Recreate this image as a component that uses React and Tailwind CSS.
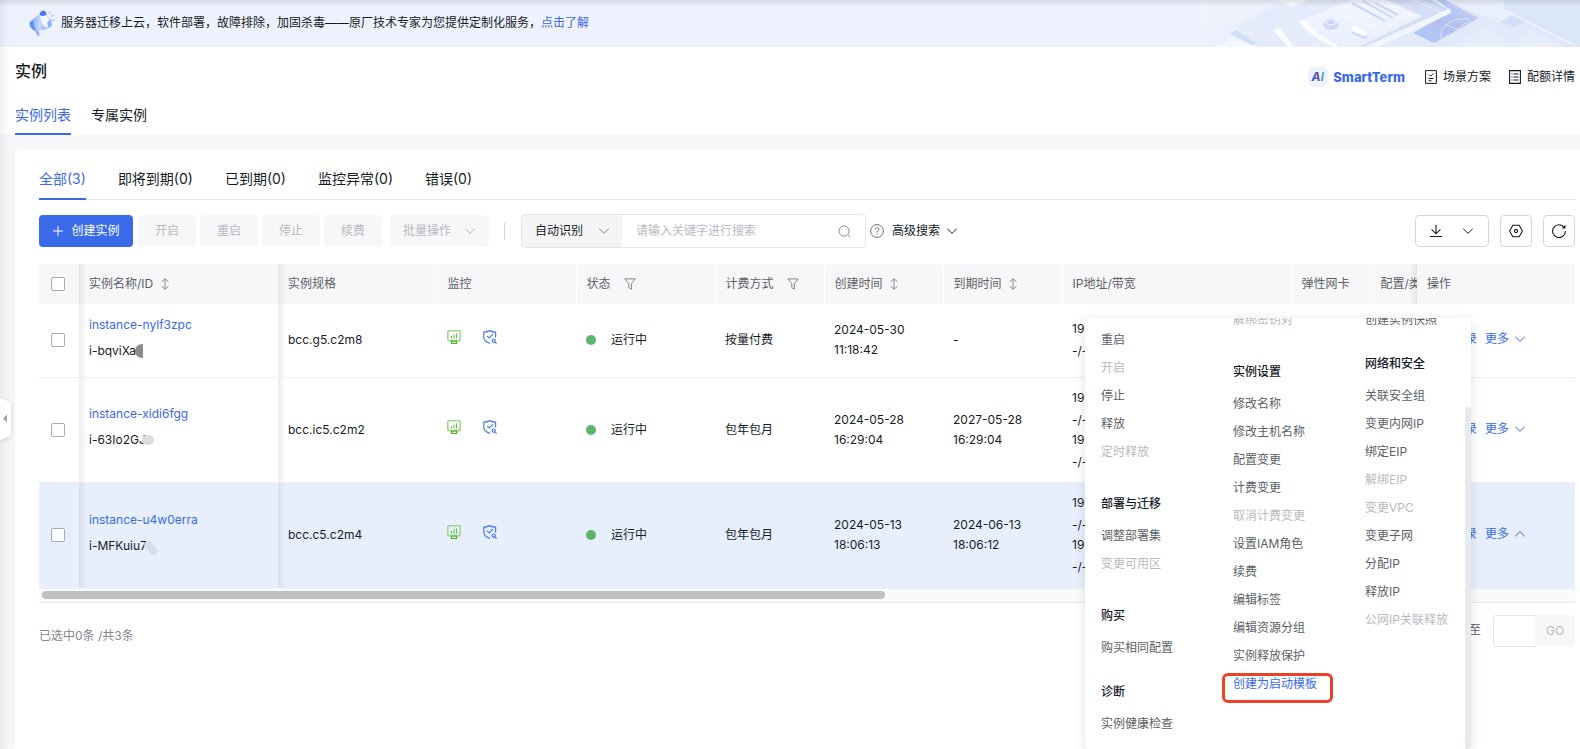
const SECTIONS = [
  {
    className: 'w-[132px] shrink-0 pt-5',
    groups: [
      { gap: 'mb-6', items: ['重启', '!开启', '停止', '释放', '!定时释放'] },
      { title: '部署与迁移', gap: 'mb-6', items: ['调整部署集', '!变更可用区'] },
      { title: '购买', gap: 'mb-4', items: ['购买相同配置'] },
      { title: '诊断', gap: 'mb-4', items: ['实例健康检查'] },
    ],
  },
  {
    className: 'w-[132px] shrink-0',
    groups: [
      { gap: 'mb-6', items: ['!解绑密钥对'] },
      {
        title: '实例设置',
        gap: '',
        items: [
          '修改名称', '修改主机名称', '配置变更', '计费变更', '!取消计费变更', '设置IAM角色',
          '续费', '编辑标签', '编辑资源分组', '实例释放保护', '*创建为启动模板',
        ],
      },
    ],
  },
  {
    className: 'flex-1',
    groups: [
      { gap: 'mb-4', items: ['创建实例快照'] },
      {
        title: '网络和安全',
        gap: '',
        items: [
          '关联安全组', '变更内网IP', '绑定EIP', '!解绑EIP', '!变更VPC', '变更子网',
          '分配IP', '释放IP', '!公网IP关联释放',
        ],
      },
    ],
  },
]

const INSTANCES = [
  { name: 'instance-nylf3zpc', id: 'i-bqviXa', mask: 'half', spec: 'bcc.g5.c2m8', billing: '按量付费', created: ['2024-05-30', '11:18:42'], expires: ['-'], ips: 1, height: 'h-[73px]' },
  { name: 'instance-xidi6fgg', id: 'i-63Io2GJ', mask: 'blob', spec: 'bcc.ic5.c2m2', billing: '包年包月', created: ['2024-05-28', '16:29:04'], expires: ['2027-05-28', '16:29:04'], ips: 2, height: 'h-[105px]' },
  { name: 'instance-u4w0erra', id: 'i-MFKuiu7', mask: 'stroke', spec: 'bcc.c5.c2m4', billing: '包年包月', created: ['2024-05-13', '18:06:13'], expires: ['2024-06-13', '18:06:12'], ips: 2, height: 'h-[106px]', active: true },
]

const TABS = ['全部(3)', '即将到期(0)', '已到期(0)', '监控异常(0)', '错误(0)']

const pinShadow = 'bg-linear-to-r from-black/7 to-transparent bg-[length:8px_100%] bg-no-repeat'

function Chevron({ className = '', up = false }) {
  return (
    <svg viewBox="0 0 12 12" className={`size-3 shrink-0 ${className}`} fill="none" stroke="currentColor" strokeWidth="1">
      <path d={up ? 'M1.2 8.3 6 3.7l4.8 4.6' : 'M1.2 3.7 6 8.3l4.8-4.6'} />
    </svg>
  )
}

function SortIcon() {
  return (
    <svg viewBox="0 0 8 12" className="h-3 w-2 shrink-0" fill="none" stroke="#84868c" strokeWidth="1">
      <path d="M4 1v10M.6 3.8 4 .6l3.4 3.2M.6 8.2 4 11.400l3.400-3.200" />
    </svg>
  )
}

function FilterIcon() {
  return (
    <svg viewBox="0 0 12 12" className="size-3 shrink-0" fill="none" stroke="#84868c" strokeWidth="1">
      <path d="M.8.9h10.4L7.4 5.6v5.6L4.8 9.6v-4z" />
    </svg>
  )
}

function MonitorIcon() {
  return (
    <svg viewBox="0 0 14 14" className="size-[14px]" fill="none">
      <rect x=".8" y=".8" width="12.4" height="9.8" rx="1" stroke="#9fdb86" strokeWidth="1.6" />
      <path d="M4.5 8.6V6M7 8.6V4.6M9.5 8.6V3.2" stroke="#6cc04a" strokeWidth="1.1" />
      <path d="M4.4 13.3v-2.200h5.200v2.200z" fill="#fff" stroke="#52b52f" strokeWidth="1.2" />
    </svg>
  )
}

function ShieldIcon() {
  return (
    <svg viewBox="0 0 14 14" className="size-[14px]" fill="none" stroke="#4a78ee" strokeWidth="1.2">
      <path d="M7 13.400C3 12.200.8 10 .8 7V2.200C3 2.100 5 1.500 6.700.6c1.700.9 3.700 1.500 5.900 1.600V7.500" />
      <path d="m4 5.800 2.200 2.200 3.800-3.800" />
      <circle cx="10.700" cy="10.600" r="1.600" />
      <path d="m11.800 11.800 1.800 1.800" />
    </svg>
  )
}

function Megaphone() {
  return (
    <svg viewBox="0 0 28 28" className="size-7" fill="none">
      <defs>
        <linearGradient id="horn" x1="0" y1="0" x2="1" y2="0">
          <stop offset="0" stopColor="#6f9bf8" />
          <stop offset=".45" stopColor="#c4d8ff" />
          <stop offset="1" stopColor="#7da5fb" />
        </linearGradient>
      </defs>
      <path d="M6 19l4 1 1.800 6c-1 1.300-2.400 1-3 0z" fill="#8fb2fb" />
      <path d="M2 13c2-2.500 6-4.500 10.500-9.500C17 1 23.500 12 23.500 17c-4 3.500-9 4-15 5C4 21 .5 17 2 13z" fill="url(#horn)" />
      <path d="M2 13c-1.500 3.500 2 8.500 6.500 9-2-2.500-3-6-3-10C4 12.300 2.800 12.500 2 13z" fill="#5f8ff6" />
      <ellipse cx="17" cy="11.500" rx="4" ry="7.400" transform="rotate(-24 17 11.500)" fill="#f1f6ff" />
      <path d="M11.800 6C11.500 2.500 15 .8 17.500 2.600l1 3.200c-1.800 1.500-4.700 1.500-6.700.2z" fill="#4877f2" />
      <path d="M19 13.500c2-.5 3.500-3 3.500-4.500l1.500 7-3.500 3z" fill="#8db0fb" />
      <path d="M21 4.500l1.300-2.200M23 7.500l2.500-1.300M24 11l2.500.3" stroke="#a9c4fc" strokeWidth="1.300" />
    </svg>
  )
}

function BannerArt() {
  return (
    <svg viewBox="0 0 380 47" className="absolute right-0 top-0 h-full w-[380px]" preserveAspectRatio="xMaxYMid slice" fill="none">
      <defs>
        <linearGradient id="fade" x1="0" y1="0" x2="1" y2="0">
          <stop offset="0" stopColor="#e4ebfa" stopOpacity="0" />
          <stop offset=".3" stopColor="#e5ecfb" />
          <stop offset="1" stopColor="#dfe7f9" />
        </linearGradient>
        <linearGradient id="glow" x1="0" y1="0" x2="0" y2="1">
          <stop offset="0" stopColor="#f3f6fe" />
          <stop offset="1" stopColor="#e9effc" />
        </linearGradient>
        <linearGradient id="deep" x1="0" y1="1" x2="1" y2="0">
          <stop offset="0" stopColor="#b3cbf8" />
          <stop offset=".5" stopColor="#b2bff0" />
          <stop offset="1" stopColor="#c6d6f8" />
        </linearGradient>
      </defs>
      <rect width="380" height="47" fill="url(#fade)" />
      <path d="M0 0h80L36 24 0 30z" fill="#eff3fd" opacity=".8" />
      <path d="M36 26 78 5l14 3 16-8h42l-50 22 12 25H62z" fill="#e3eafa" opacity=".8" />
      <path d="M78 0l14 7 15-7z" fill="#f8faff" />
      <path d="M36 30l22 14-6 1-22-11z" fill="#cfdff8" />
      <path d="M16 47l17-9 24 9z" fill="#f3f7fe" />
      <path d="M98 21 152 0h76l22 10-76 37h-40q-22-8-36-26z" fill="#d6dff7" />
      <path d="M98 21 152 0h34l36 16-63 31h-25q-22-8-36-26z" fill="url(#glow)" />
      <path d="M98 21q16 18 36 26l5-1Q115 34 106 21z" fill="#fbfcff" />
      <path d="M145 14l34 16" stroke="#fafcff" />
      <path d="M212 0l36 15" stroke="#e9effd" />
      <path d="M152 3l33 18M163 1l30 17M175 3l23 12" stroke="#ccd7f6" strokeWidth="2" />
      <path d="M237 0h8l34 18-45 25-21-10 38-21z" fill="url(#deep)" />
      <path d="M222 0h13l16 10v3l-73 34h-14l80-36z" fill="#f4f7ff" opacity=".9" />
      <path d="M222 0h10l16 9-4 2z" fill="#ccd7f6" />
      <path d="M241 38c-2-10 10-21 28-19M258 34c-1-8 8-13 18-12M245 24l32 14" stroke="#dce5fb" />
      <ellipse cx="131" cy="24" rx="8" ry="6" fill="#cddaf7" />
      <ellipse cx="131" cy="21.500" rx="7" ry="4" fill="#e6edfc" />
      <ellipse cx="131" cy="22" rx="4" ry="2" fill="#c9d7f6" />
      <path d="M152 27l3-1 12 5v5l-3 1-12-5z" fill="#fafcff" />
      <path d="M152 31l12 5 3-1v3l-3 1-12-5z" fill="#d2def7" />
      <path d="M74 31q3-4 7-2l13 18h-6z" fill="#fafcff" />
      <path d="M246 0h56l11 14-14 9-30-13z" fill="#e9effb" />
      <path d="M300 22l18-10 14 6-18 9z" fill="#d3dff8" />
      <path d="M304 0h76v47h-6L304 10z" fill="#dce6f9" />
      <path d="M304 10l68 34" stroke="#f1f5fe" strokeWidth="1.500" />
      <path d="M250 47l36-20 26 14 20-12 34 18z" fill="#e6edfb" opacity=".8" />
    </svg>
  )
}

function Banner() {
  return (
    <div className="relative flex h-[47px] items-center bg-[#eef2fe] pl-7">
      <BannerArt />
      <div className="relative flex items-center gap-[5px] pb-0.5">
        <Megaphone />
        <p>
          服务器迁移上云，软件部署，故障排除，加固杀毒——原厂技术专家为您提供定制化服务，
          <a href="#learn" className="text-[#3a69ea]">点击了解</a>
        </p>
      </div>
      <div className="absolute inset-x-0 top-0 h-1.5 bg-linear-to-b from-black/10 to-transparent" />
    </div>
  )
}

function PageHeader() {
  return (
    <header className="flex h-[88px] justify-between bg-white pl-[15px] pr-[5px]">
      <div className="flex flex-col justify-between pt-3">
        <h1 className="text-base leading-6 font-medium text-[#151b26]">实例</h1>
        <nav className="flex gap-5 text-sm">
          <a href="#list" className="h-[31px] border-b-2 border-[#3a69ea] leading-[22px] text-[#3a69ea]">实例列表</a>
          <a href="#dedicated" className="leading-[22px]">专属实例</a>
        </nav>
      </div>
      <div className="mt-5 flex h-5 items-center">
        <a href="#smartterm" className="flex items-center gap-[5px] text-[13px] font-extrabold text-[#3a69ea]">
          <span className="flex size-5 items-center justify-center rounded-md bg-[#eef2ff]">
            <span className="bg-linear-to-r from-[#2b5bf0] via-[#6a4bb0] to-[#35d0c8] bg-clip-text pr-px text-xs font-extrabold text-transparent italic">AI</span>
          </span>
          SmartTerm
        </a>
        <a href="#scenes" className="ml-5 flex items-center gap-1.5">
          <svg viewBox="0 0 12 14" className="h-[14px] w-3" fill="none" stroke="#151b26" strokeWidth="1">
            <path d="M3.500.6H.6v12.800h10.800V.6H8.500M3.500.6h5M4 4.600l1.600 1.600L8.400 3.400M3.500 8.500h5M3.500 10.800h3" />
          </svg>
          场景方案
        </a>
        <a href="#quota" className="ml-[18px] flex items-center gap-1.5">
          <svg viewBox="0 0 12 14" className="h-[14px] w-3" fill="none" stroke="#151b26" strokeWidth="1.100">
            <path d="M.6.6h10.800v12.800H.6zM2.500 4h1M4.500 4h5M2.500 7h1M4.500 7h5M2.500 10h1M4.500 10h5" />
          </svg>
          配额详情
        </a>
      </div>
    </header>
  )
}

function DisabledButton({ children, className = 'w-[58px]' }) {
  return (
    <button disabled className={`flex h-8 items-center justify-center rounded bg-[#f7f7f9] text-[#b8babf] ${className}`}>
      {children}
    </button>
  )
}

function Toolbar() {
  return (
    <div className="mt-[15px] flex h-8 items-center">
      <button className="mr-[5px] flex h-8 w-[94px] items-center justify-center gap-2 rounded bg-[#3a69ea] pl-px text-white">
        <svg viewBox="0 0 10 10" className="size-2.5" stroke="#fff" strokeWidth="1"><path d="M5 0v10M0 5h10" /></svg>
        创建实例
      </button>
      <div className="flex gap-1">
        <DisabledButton>开启</DisabledButton>
        <DisabledButton>重启</DisabledButton>
        <DisabledButton>停止</DisabledButton>
        <DisabledButton>续费</DisabledButton>
      </div>
      <DisabledButton className="ml-2 w-[99px] gap-[13px]">批量操作 <Chevron /></DisabledButton>
      <div className="ml-[15px] h-[17px] w-px bg-[#d4d6d9]" />

      <div className="ml-4 flex h-[34px] w-[345px] items-center overflow-hidden rounded border border-[#e4e5e8]">
        <div className="relative h-full w-[100px] shrink-0">
          <select aria-label="搜索类型" className="h-full w-full appearance-none bg-[#f5f5f6] pl-[13px]">
            <option>自动识别</option>
          </select>
          <Chevron className="pointer-events-none absolute right-3 top-[10px] text-[#84868c]" />
        </div>
        <input aria-label="搜索" placeholder="请输入关键字进行搜索" className="min-w-0 flex-1 pl-[14px] outline-none placeholder:text-[#b8babf]" />
        <svg viewBox="0 0 14 14" className="mr-[14px] size-[13px]" fill="none" stroke="#84868c" strokeWidth="1">
          <circle cx="6.500" cy="6.500" r="5.500" /><path d="m10.500 10.500 2.700 2.700" />
        </svg>
      </div>
      <svg viewBox="0 0 14 14" className="ml-1 size-[14px]" fill="none" stroke="#5c5f66" strokeWidth=".9">
        <circle cx="7" cy="7" r="6.400" />
        <path d="M5.200 5.600c0-2.500 3.700-2.400 3.700-.2C8.900 7 7 6.800 7 8.500M7 9.600v1" />
      </svg>
      <button className="ml-2 flex items-center gap-1.5">高级搜索 <Chevron /></button>

      <div className="ml-auto flex gap-[11px]">
        <button aria-label="下载" className="flex h-8 w-[74px] items-center justify-center gap-5 rounded border border-[#d4d6d9]">
          <svg viewBox="0 0 12 14" className="h-[14px] w-3" fill="none" stroke="#151b26" strokeWidth="1.100">
            <path d="M6 .8v9M1.600 5.400 6 9.800l4.400-4.400M0 12.500h12" />
          </svg>
          <Chevron />
        </button>
        <button aria-label="设置" className="flex size-8 items-center justify-center rounded border border-[#d4d6d9]">
          <svg viewBox="0 0 14 14" className="size-[14px]" fill="none" stroke="#151b26" strokeWidth="1.100">
            <path d="M3.800 1.200h6.400L13.400 7l-3.200 5.800H3.800L.6 7z" /><circle cx="7" cy="7" r="1.600" />
          </svg>
        </button>
        <button aria-label="刷新" className="flex size-8 items-center justify-center rounded border border-[#d4d6d9]">
          <svg viewBox="0 0 14 14" className="size-[14px]" fill="none" stroke="#151b26" strokeWidth="1.100">
            <path d="M12.300 3.600A6.400 6.400 0 1 0 13.400 7" />
            <path d="M13.400.8v3.700H9.800z" fill="#151b26" stroke="none" />
          </svg>
        </button>
      </div>
    </div>
  )
}

function Checkbox({ label }) {
  return (
    <input type="checkbox" aria-label={label} className="ml-3 block size-[14px] appearance-none rounded-xs border border-[#a9abb0] bg-white" />
  )
}

function Mask({ type }) {
  if (type === 'half') {
    return <span className="-ml-px h-[14px] w-2 rounded-l-full bg-[#8c8c8c]" />
  }
  if (type === 'blob') {
    return <span className="-ml-1 h-2.5 w-3 rounded-full bg-[#dcdcdd]" />
  }
  return <span className="mt-1 h-4 w-2 -rotate-40 rounded-full bg-[#d5dcea]" />
}

function InstanceRow({ row }) {
  return (
    <tr className={`${row.height} border-b border-[#eeeff1] ${row.active ? 'bg-[#e7effd]' : ''}`}>
      <td><Checkbox label={row.name} /></td>
      <td className={`pb-[5px] pl-2.5 leading-[26px] ${pinShadow}`}>
        <a href="#instance" className="block text-[#3a69ea]">{row.name}</a>
        <div className="flex items-center">{row.id}<Mask type={row.mask} /></div>
      </td>
      <td className={`pl-2.5 ${pinShadow}`}>{row.spec}</td>
      <td className="pb-1.5 pl-2.5">
        <div className="flex gap-[22px]"><MonitorIcon /><ShieldIcon /></div>
      </td>
      <td className="pl-2.5">
        <div className="flex items-center gap-[15px]">
          <span className="size-2.5 rounded-full bg-[#5bb56b]" />运行中
        </div>
      </td>
      <td className="pl-2.5">{row.billing}</td>
      <td className="pl-2.5">{row.created.map(t => <div key={t}>{t}</div>)}</td>
      <td className="pl-2.5">{row.expires.map(t => <div key={t}>{t}</div>)}</td>
      <td className="pl-2.5">
        {Array.from({ length: row.ips }, (_, i) => (
          <div key={i} className="flex flex-col gap-0.5"><span>192.168.0.{i + 2}</span><span>-/-</span></div>
        ))}
      </td>
      <td className="pl-2.5">-</td>
      <td className="pl-2.5">-</td>
      <td className="pb-0.5 pl-2.5">
        <div className="flex items-center text-[#3a69ea]">
          <a href="#vnc">VNC登录</a>
          <button className="ml-2 flex items-center gap-[5px]">更多 <Chevron up={row.active} /></button>
        </div>
      </td>
    </tr>
  )
}

function InstanceTable() {
  const th = 'pl-2.5 text-left font-normal border-l border-white'
  return (
    <div className="mt-[17px]">
      <table className="w-full table-fixed border-collapse">
        <colgroup>
          <col className="w-10" />
          <col className="w-[199px]" />
          <col className="w-[159px]" />
          <col className="w-[139px]" />
          <col className="w-[139px]" />
          <col className="w-[109px]" />
          <col className="w-[119px]" />
          <col className="w-[119px]" />
          <col />
          <col className="w-[79px]" />
          <col className="w-[47px]" />
          <col className="w-[158px]" />
        </colgroup>
        <thead>
          <tr className="h-10 bg-[#f7f7f9] text-[#5c5f66]">
            <th><Checkbox label="全选" /></th>
            <th className={`pl-2.5 text-left font-normal ${pinShadow}`}>
              <div className="flex items-center gap-2">实例名称/ID <SortIcon /></div>
            </th>
            <th className={`pl-2.5 text-left font-normal ${pinShadow}`}>实例规格</th>
            <th className={th}>监控</th>
            <th className={th}><div className="flex items-center gap-[13px]">状态 <FilterIcon /></div></th>
            <th className={th}><div className="flex items-center gap-[13px]">计费方式 <FilterIcon /></div></th>
            <th className={th}><div className="flex items-center gap-[7px]">创建时间 <SortIcon /></div></th>
            <th className={th}><div className="flex items-center gap-[7px]">到期时间 <SortIcon /></div></th>
            <th className={th}>IP地址/带宽</th>
            <th className={th}>弹性网卡</th>
            <th className={`${th} overflow-hidden whitespace-nowrap bg-linear-to-l from-black/7 to-transparent bg-[length:8px_100%] bg-right bg-no-repeat`}>配置/类型</th>
            <th className="pl-2.5 text-left font-normal">操作</th>
          </tr>
        </thead>
        <tbody>
          {INSTANCES.map(row => <InstanceRow key={row.name} row={row} />)}
        </tbody>
      </table>
      <div className="flex h-[14px] items-center border-b border-[#e8e9eb] bg-[#fafafa] pl-[3px]">
        <div className="h-2 w-[55%] rounded-full bg-[#c1c1c1]" />
      </div>
    </div>
  )
}

function MoreMenu() {
  return (
    <div className="absolute top-[318px] right-[109px] h-[431px] w-[386px] overflow-hidden rounded bg-white shadow-[0_2px_12px_rgba(7,12,20,0.12)]">
      <div className="-mt-3 flex pl-4">
        {SECTIONS.map((col, i) => (
          <div key={i} className={col.className}>
            {col.groups.map((group, j) => (
              <section key={j} className={group.gap}>
                {group.title && <h3 className="mb-1 leading-7 font-medium text-[#151b26]">{group.title}</h3>}
                {group.items.map(item => <MenuItem key={item} item={item} />)}
              </section>
            ))}
          </div>
        ))}
      </div>
      <div className="absolute top-[89px] right-0 bottom-0 w-1.5 rounded-t-full bg-[#e8e9eb]" />
    </div>
  )
}

// "!" marks a disabled entry, "*" the highlighted one
function MenuItem({ item }) {
  if (item[0] === '!') {
    return <button disabled className="block h-7 whitespace-nowrap text-[#b8babf]">{item.slice(1)}</button>
  }
  if (item[0] === '*') {
    return (
      <button className="relative block h-7 whitespace-nowrap text-[#3a69ea]">
        {item.slice(1)}
        <span className="absolute top-[3px] -left-[11px] h-[30px] w-[111px] rounded-md border-3 border-[#ea4228]" />
      </button>
    )
  }
  return <button className="block h-7 whitespace-nowrap text-[#5c5f66]">{item}</button>
}

export default function App() {
  return (
    <div className="relative h-screen overflow-hidden bg-[#f7f7f9] font-[Inter,'Noto_Sans_CJK_SC',sans-serif] text-xs leading-5 text-[#151b26]">
      <Banner />
      <PageHeader />
      <main className="mt-4 ml-[15px] h-full rounded-tl bg-white pr-[5px] pl-6">
        <nav className="flex h-[49px] gap-8 border-b border-[#e4e5e8] pt-[17px] text-sm leading-[22px]">
          {TABS.map((tab, i) => (
            <a key={tab} href="#tab" className={i === 0 ? 'h-8 border-b-2 border-[#3a69ea] text-[#3a69ea]' : ''}>{tab}</a>
          ))}
        </nav>
        <Toolbar />
        <InstanceTable />
        <div className="mt-3 flex items-start justify-between">
          <p className="mt-[11px] text-[#84868c]">已选中0条 /共3条</p>
          <div className="flex">
            <label htmlFor="page" className="mt-[5px] mr-3 text-[#5c5f66]">跳至</label>
            <input id="page" className="h-8 w-[42px] rounded-l border border-r-0 border-[#e4e5e8] outline-none" />
            <button disabled className="h-8 w-10 rounded-r bg-[#f7f7f9] text-[#b8babf]">GO</button>
          </div>
        </div>
      </main>
      <MoreMenu />
      <div className="absolute inset-y-0 left-0 w-2.5 bg-linear-to-r from-black/5 to-transparent" />
      <button aria-label="收起" className="absolute top-[398px] left-0">
        <svg viewBox="0 0 14 42" className="h-[42px] w-[14px] drop-shadow-sm">
          <path d="M0 0l8.500 3.200Q11 4 11 7v28q0 3-2.500 3.800L0 42z" fill="#fff" />
          <path d="M7 16.500v8L3 20.500z" fill="#a0a2a7" />
        </svg>
      </button>
    </div>
  )
}
